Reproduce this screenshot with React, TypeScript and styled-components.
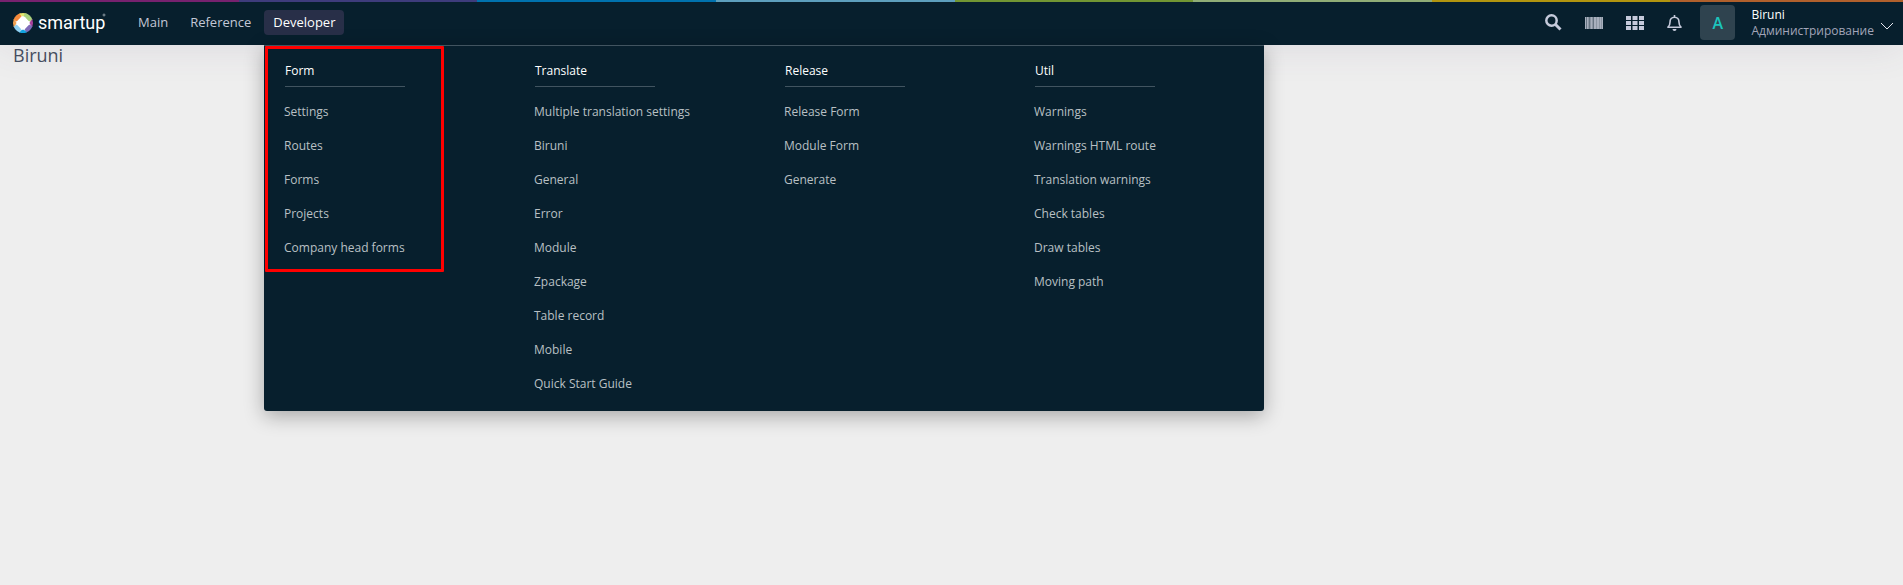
import React from "react";
import styled, { createGlobalStyle } from "styled-components";

const GlobalStyle = createGlobalStyle`
  * { box-sizing: border-box; }
  body {
    margin: 0;
    background: #eeeeee;
    font-family: "Open Sans", "Noto Sans", sans-serif;
    font-size: 13px;
  }
`;

const Page = styled.div`
  min-height: 100vh;
`;

const Header = styled.header`
  position: relative;
  z-index: 1;
  background: #071f2d;
  box-shadow: 0 0 40px rgba(82, 63, 105, 0.12);
`;

const Stripe = styled.div`
  display: flex;
  height: 2px;
  overflow: hidden;
`;

const Segment = styled.span<{ $color: string }>`
  flex: 0 0 12.54%;
  background: ${(p) => p.$color};
`;

const Bar = styled.div`
  display: flex;
  align-items: center;
  height: 43px;
  padding: 0 9px 2px 12px;
`;

const LogoLink = styled.a`
  display: flex;
  margin-right: 17px;
`;

const Nav = styled.nav`
  display: flex;
  gap: 4px;
`;

const NavLink = styled.a<{ $active?: boolean }>`
  padding: 0 9px;
  line-height: 25px;
  border-radius: 4px;
  text-decoration: none;
  color: ${(p) => (p.$active ? "#ffffff" : "#c3c8d6")};
  background: ${(p) => (p.$active ? "#282f48" : "transparent")};
`;

const Tools = styled.div`
  display: flex;
  align-items: center;
  gap: 23px;
  margin-left: auto;
`;

const ToolButton = styled.button`
  display: flex;
  padding: 0;
  border: 0;
  background: none;
  color: #c5cadb;
`;

const UserButton = styled.button`
  display: flex;
  align-items: center;
  padding: 0;
  border: 0;
  background: none;
  margin-left: 18px;
  font: inherit;
  text-align: left;
`;

const Avatar = styled.span`
  width: 35px;
  height: 35px;
  margin-right: 16px;
  border-radius: 4px;
  background: #2f434f;
  color: #1bc5bd;
  font-size: 16px;
  font-weight: 600;
  line-height: 37px;
  text-align: center;
`;

const UserText = styled.span`
  display: flex;
  flex-direction: column;
  margin-right: 6px;
  color: #a2a5b9;
  font-size: 12px;
  line-height: 16px;
`;

const UserName = styled.span`
  color: #ffffff;
`;

const Chevron = styled.svg`
  margin-top: 7px;
`;

const Menu = styled.div`
  position: absolute;
  top: 100%;
  left: 264px;
  display: grid;
  grid-template-columns: repeat(4, 1fr);
  width: 1000px;
  padding: 14px 0 10px;
  border-top: 1px solid #415460;
  border-radius: 0 0 3px 3px;
  background: #071f2d;
  box-shadow: 0 5px 20px rgba(0, 0, 0, 0.3);
`;

const Column = styled.section`
  position: relative;
  padding-left: 20px;
`;

const ColumnTitle = styled.h2`
  width: 120px;
  margin: 0 0 8px 1px;
  padding-bottom: 4px;
  border-bottom: 1px solid #415460;
  color: #ffffff;
  font-size: 12px;
  font-weight: 500;
  line-height: 22px;
`;

const Links = styled.ul`
  margin: 0;
  padding: 0;
  list-style: none;
`;

const MenuLink = styled.a`
  display: block;
  color: #b9c0c4;
  font-size: 12px;
  line-height: 34px;
  text-decoration: none;
`;

const Highlight = styled.span`
  position: absolute;
  top: -14px;
  left: 1px;
  width: 179px;
  height: 226px;
  border: 3px solid #ff0000;
  border-radius: 1px;
  pointer-events: none;
`;

const Title = styled.h1`
  margin: 0;
  padding-left: 13px;
  color: #464e5f;
  font-size: 18px;
  font-weight: 400;
  line-height: 20px;
`;

const STRIPES = ["#77216f", "#3e3c7c", "#0072ae", "#5d9fbd", "#729633", "#90ad77", "#b2950f", "#b0602c"];

const COLUMNS = [
  { title: "Form", marked: true, links: ["Settings", "Routes", "Forms", "Projects", "Company head forms"] },
  {
    title: "Translate",
    links: ["Multiple translation settings", "Biruni", "General", "Error", "Module", "Zpackage", "Table record", "Mobile", "Quick Start Guide"],
  },
  { title: "Release", links: ["Release Form", "Module Form", "Generate"] },
  {
    title: "Util",
    links: ["Warnings", "Warnings HTML route", "Translation warnings", "Check tables", "Draw tables", "Moving path"],
  },
];

const Logo = () => (
  <svg width="100" height="35" viewBox="0 0 100 35" role="img" aria-label="smartup">
    <g transform="translate(11 18)">
      <circle r="9" fill="#ffffff" />
      <path d="M-9.500-3A10 10 0 0 1-2-9.800L-1.500-6-6-1.500Z" fill="#f58a3c" />
      <path d="M-4-9.200A10 10 0 0 1 4-9.200L0-6Z" fill="#e3e86e" />
      <path d="M2-9.800A10 10 0 0 1 9.500-3L6-1.500 0-6Z" fill="#a9d27c" />
      <path d="M9.200-4A10 10 0 0 1 9.200 4L6 0Z" fill="#a8409a" />
      <path d="M9.500 3A10 10 0 0 1 3 9.500L1.500 6 6 1.500Z" fill="#7e6ab8" />
      <path d="M4 9.200A10 10 0 0 1-4 9.200L0 6Z" fill="#12a3e0" />
      <path d="M-3 9.500A10 10 0 0 1-9.500 3L-6 1.500-1.500 6Z" fill="#8fd0f2" />
      <path d="M-9.200 4A10 10 0 0 1-9.200-4L-6 0Z" fill="#f0a050" />
      <rect x="-5.500" y="-5.500" width="11" height="11" rx="3" fill="#ffffff" transform="rotate(45)" />
    </g>
    <text x="26" y="24" fill="#ffffff" fontFamily="Roboto, sans-serif" fontSize="18">
      smartup
    </text>
    <circle cx="92" cy="10" r="1" fill="none" stroke="#8b98a1" />
  </svg>
);

const SearchIcon = () => (
  <svg width="17" height="17" viewBox="0 0 17 17" fill="none" stroke="currentColor">
    <circle cx="6.500" cy="6.500" r="5.200" strokeWidth="2.500" />
    <path d="M10.500 10.500l5 5" strokeWidth="3" />
  </svg>
);

const BarcodeIcon = () => (
  <svg width="18" height="12" viewBox="0 0 18 12">
    <path d="M0 0h18v12H0z" fill="#8b96a3" />
    <path d="M0 0h1v12H0zM2 0h1v12H2zM6 0h1v12H6zM9 0h2v12H9zM12 0h2v12h-2zM15 0h1v12h-1zM17 0h1v12h-1z" fill="#a8b0be" />
    <path d="M1 0h1v12H1zM4 0h1v12H4zM8 0h1v12H8z" fill="#667482" />
  </svg>
);

const GridIcon = () => (
  <svg width="18" height="14" viewBox="0 0 18 14" fill="currentColor">
    {[0, 5, 10].map((y) =>
      [0, 6.5, 13].map((x) => <rect key={`${x}-${y}`} x={x} y={y} width="5" height="4" />)
    )}
  </svg>
);

const BellIcon = () => (
  <svg width="15" height="16" viewBox="0 0 15 16">
    <path
      d="M7.500 0v2M1 12.200h13c-1.600-1.400-2-3-2-5 0-3-1.700-5-4.500-5S3 4.200 3 7.200c0 2-.4 3.600-2 5z"
      fill="none"
      stroke="currentColor"
      strokeWidth="1.600"
      strokeLinejoin="round"
    />
    <path d="M5.500 14h4a2 2 0 0 1-4 0z" fill="currentColor" />
  </svg>
);

const TOOLS = [
  { label: "Search", Icon: SearchIcon },
  { label: "Barcode", Icon: BarcodeIcon },
  { label: "Applications", Icon: GridIcon },
  { label: "Notifications", Icon: BellIcon },
];

export default function App() {
  return (
    <Page>
      <GlobalStyle />
      <Header>
        <Stripe>
          {STRIPES.map((c) => (
            <Segment key={c} $color={c} />
          ))}
        </Stripe>
        <Bar>
          <LogoLink href="#">
            <Logo />
          </LogoLink>
          <Nav>
            <NavLink href="#">Main</NavLink>
            <NavLink href="#">Reference</NavLink>
            <NavLink href="#" $active>Developer</NavLink>
          </Nav>
          <Tools>
            {TOOLS.map(({ label, Icon }) => (
              <ToolButton key={label} aria-label={label}>
                <Icon />
              </ToolButton>
            ))}
          </Tools>
          <UserButton>
            <Avatar>A</Avatar>
            <UserText>
              <UserName>Biruni</UserName>
              <span>Администрирование</span>
            </UserText>
            <Chevron width="14" height="8" viewBox="0 0 14 8" fill="none" stroke="#e4e6ef">
              <path d="M1 1l6 6 6-6" />
            </Chevron>
          </UserButton>
        </Bar>
        <Menu>
          {COLUMNS.map((col) => (
            <Column key={col.title}>
              <ColumnTitle>{col.title}</ColumnTitle>
              <Links>
                {col.links.map((l) => (
                  <li key={l}>
                    <MenuLink href="#">{l}</MenuLink>
                  </li>
                ))}
              </Links>
              {col.marked && <Highlight />}
            </Column>
          ))}
        </Menu>
      </Header>
      <Title>Biruni</Title>
    </Page>
  );
}
